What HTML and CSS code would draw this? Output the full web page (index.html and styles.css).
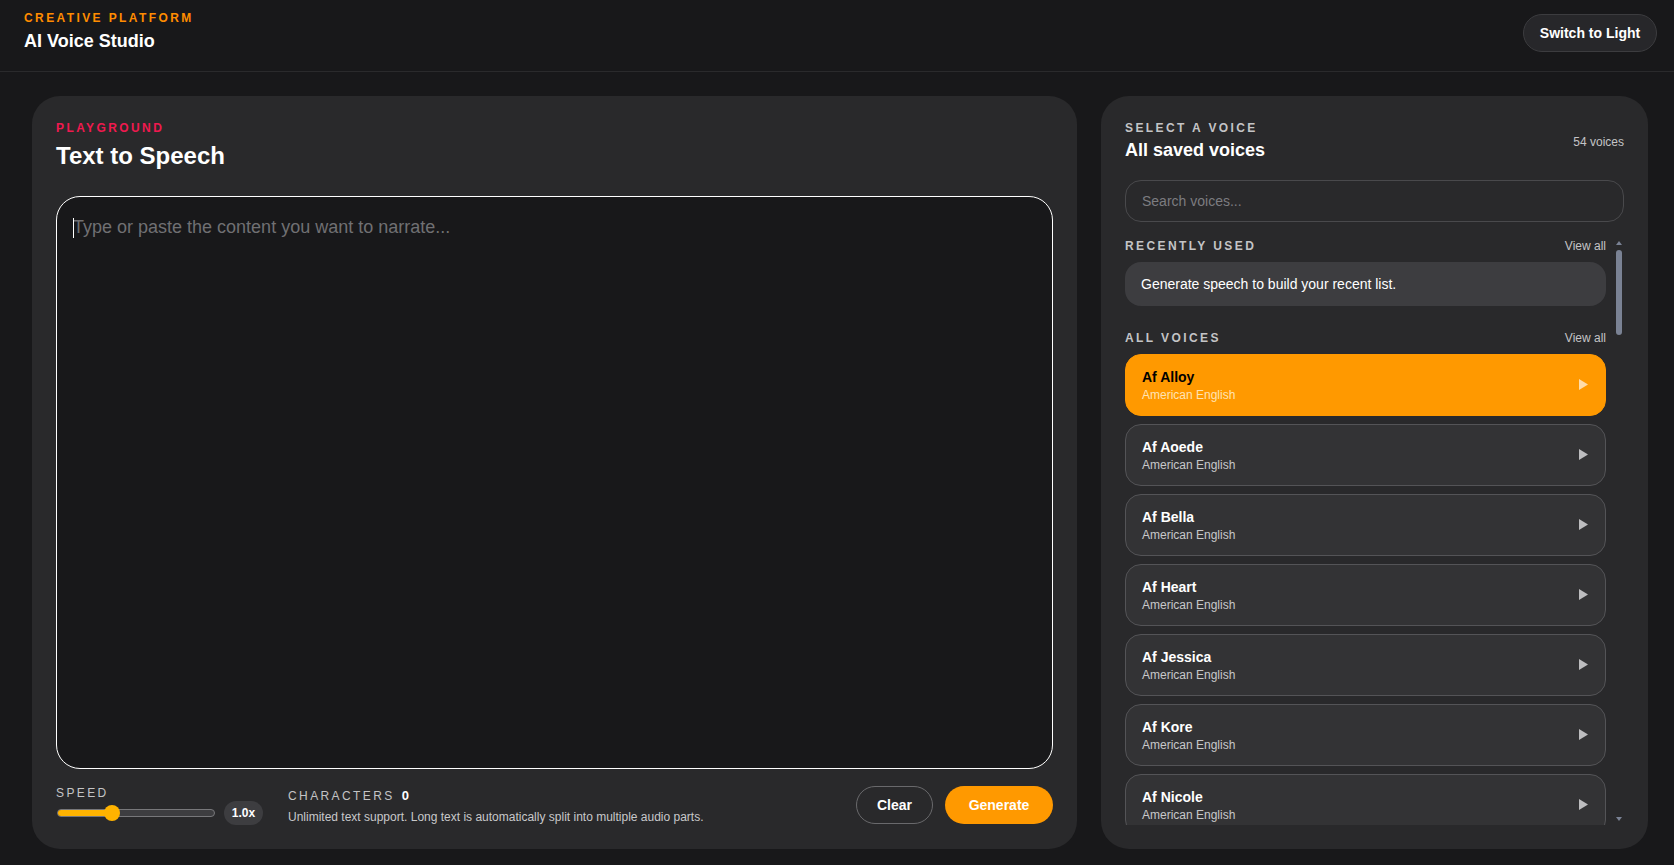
FILE: index.html
```html
<!DOCTYPE html>
<html lang="en">
<head>
    <meta charset="UTF-8">
    <meta name="viewport" content="width=device-width, initial-scale=1.0">
    <title>AI Voice Studio</title>
    <link rel="stylesheet" href="styles.css">
</head>
<body>

    <header class="topbar">
        <div>
            <p class="brand-eyebrow">Creative Platform</p>
            <h1 class="brand-title">AI Voice Studio</h1>
        </div>
        <button class="theme-btn" id="themeToggle">Switch to Light</button>
    </header>

    <main class="layout">
        <section class="panel editor">
            <p class="editor-eyebrow">Playground</p>
            <h2 class="editor-title">Text to Speech</h2>

            <div class="editor-field">
                <textarea class="editor-input" id="textInput" placeholder="Type or paste the content you want to narrate..."></textarea>
                <span class="editor-caret"></span>
            </div>

            <div class="controls">
                <div class="speed">
                    <span class="speed-label">Speed</span>
                    <div class="speed-row">
                        <div class="slider"><div class="slider-fill"><span class="slider-thumb"></span></div></div>
                        <span class="speed-value">1.0x</span>
                    </div>
                </div>
                <div class="chars">
                    <p class="chars-line"><span class="chars-label">Characters</span><span class="chars-count">0</span></p>
                    <p class="chars-note">Unlimited text support. Long text is automatically split into multiple audio parts.</p>
                </div>
                <div class="actions">
                    <button class="btn btn-ghost">Clear</button>
                    <button class="btn btn-primary">Generate</button>
                </div>
            </div>
        </section>

        <aside class="panel voices">
            <div class="voices-head">
                <div>
                    <p class="voices-eyebrow">Select a voice</p>
                    <h2 class="voices-title">All saved voices</h2>
                </div>
                <span class="voices-count">54 voices</span>
            </div>

            <input class="search" type="text" placeholder="Search voices...">

            <div class="voices-body">
                <div class="voices-scroll">
                    <div class="group-head">
                        <span class="group-name">Recently used</span>
                        <span class="view-all">View all</span>
                    </div>
                    <p class="recent-empty">Generate speech to build your recent list.</p>

                    <div class="group-head">
                        <span class="group-name">All voices</span>
                        <span class="view-all">View all</span>
                    </div>
                    <div class="voice-list">
                        <div class="voice-card active">
                            <div>
                                <div class="voice-name">Af Alloy</div>
                                <div class="voice-lang">American English</div>
                            </div>
                            <svg class="voice-play" viewBox="0 0 9 11"><path d="M0 0L9 5.5L0 11Z"/></svg>
                        </div>
                        <div class="voice-card">
                            <div>
                                <div class="voice-name">Af Aoede</div>
                                <div class="voice-lang">American English</div>
                            </div>
                            <svg class="voice-play" viewBox="0 0 9 11"><path d="M0 0L9 5.5L0 11Z"/></svg>
                        </div>
                        <div class="voice-card">
                            <div>
                                <div class="voice-name">Af Bella</div>
                                <div class="voice-lang">American English</div>
                            </div>
                            <svg class="voice-play" viewBox="0 0 9 11"><path d="M0 0L9 5.5L0 11Z"/></svg>
                        </div>
                        <div class="voice-card">
                            <div>
                                <div class="voice-name">Af Heart</div>
                                <div class="voice-lang">American English</div>
                            </div>
                            <svg class="voice-play" viewBox="0 0 9 11"><path d="M0 0L9 5.5L0 11Z"/></svg>
                        </div>
                        <div class="voice-card">
                            <div>
                                <div class="voice-name">Af Jessica</div>
                                <div class="voice-lang">American English</div>
                            </div>
                            <svg class="voice-play" viewBox="0 0 9 11"><path d="M0 0L9 5.5L0 11Z"/></svg>
                        </div>
                        <div class="voice-card">
                            <div>
                                <div class="voice-name">Af Kore</div>
                                <div class="voice-lang">American English</div>
                            </div>
                            <svg class="voice-play" viewBox="0 0 9 11"><path d="M0 0L9 5.5L0 11Z"/></svg>
                        </div>
                        <div class="voice-card">
                            <div>
                                <div class="voice-name">Af Nicole</div>
                                <div class="voice-lang">American English</div>
                            </div>
                            <svg class="voice-play" viewBox="0 0 9 11"><path d="M0 0L9 5.5L0 11Z"/></svg>
                        </div>
                    </div>
                </div>

                <div class="scrollbar">
                    <span class="scroll-arrow up"></span>
                    <span class="scroll-thumb"></span>
                    <span class="scroll-arrow down"></span>
                </div>
            </div>
        </aside>
    </main>

</body>
</html>
```

FILE: styles.css
```css
* { margin: 0; padding: 0; box-sizing: border-box; }
html, body { height: 100%; }
body { background-color: #18181a; color: #fff; font-family: 'Liberation Sans', Arial, sans-serif; overflow: hidden; }
button { font-family: inherit; cursor: pointer; }

.topbar { height: 72px; display: flex; justify-content: space-between; align-items: flex-start; padding: 12px 17px 0 24px; border-bottom: 1px solid #2a2a2c; }
.brand-eyebrow { color: #ff8c00; font-size: 12px; font-weight: 700; letter-spacing: 0.2em; text-transform: uppercase; margin-bottom: 5px; line-height: 13px; }
.brand-title { font-size: 18px; font-weight: 700; line-height: 22px; }
.theme-btn { width: 134px; height: 38px; margin-top: 2px; background: #27272a; border: 1px solid #3c3c3f; border-radius: 19px; color: #fff; font-size: 14px; font-weight: 700; }

.layout { display: grid; grid-template-columns: 1045px 547px; gap: 24px; padding: 24px 0 16px 32px; height: 793px; }
.panel { background: #29292b; border-radius: 28px; padding: 26px 24px 25px 24px; min-height: 0; }

.editor { display: flex; flex-direction: column; }
.editor-eyebrow { color: #f0194f; font-size: 12px; font-weight: 700; letter-spacing: 0.2em; text-transform: uppercase; line-height: 13px; margin-bottom: 6px; }
.editor-title { font-size: 24px; font-weight: 700; line-height: 29px; margin-bottom: 26px; }
.editor-field { flex: 1; position: relative; min-height: 0; }
.editor-input { display: block; width: 100%; height: 100%; background: #18181a; border: 1px solid #fff; border-radius: 24px; padding: 17px 16px 16px; color: #fff; font-family: inherit; font-size: 18px; line-height: 27px; resize: none; outline: none; }
.editor-input::placeholder { color: #707073; opacity: 1; }
.editor-caret { position: absolute; left: 17px; top: 22px; width: 1px; height: 20px; background: #fff; }

.controls { display: flex; align-items: flex-start; margin-top: 17px; height: 38px; }
.speed { width: 232px; flex: none; }
.speed-label, .chars-label { display: inline-block; color: #c4c4c6; font-size: 12px; letter-spacing: 0.2em; text-transform: uppercase; line-height: 14px; }
.speed-label { display: block; }
.speed-row { display: flex; align-items: center; gap: 9px; margin: 1px 0 0 1px; }
.slider { width: 158px; height: 8px; background: #3d3d40; border: 1px solid #77777a; border-radius: 4px; }
.slider-fill { position: relative; width: 54px; height: 6px; background: #ffb300; border-radius: 3px; }
.slider-thumb { position: absolute; right: -8px; top: -5px; width: 16px; height: 16px; background: #ffb300; border-radius: 50%; }
.speed-value { width: 39px; height: 24px; line-height: 24px; text-align: center; background: #3d3d40; border-radius: 12px; font-size: 12px; font-weight: 700; }

.chars { flex: 1; padding-top: 1px; }
.chars-line { line-height: 15px; }
.chars-count { margin-left: 7px; font-size: 13px; font-weight: 700; }
.chars-note { color: #c8c8ca; font-size: 12px; line-height: 14px; margin-top: 7px; }

.actions { display: flex; gap: 12px; }
.btn { height: 38px; border-radius: 19px; color: #fff; font-size: 14px; font-weight: 700; }
.btn-ghost { width: 77px; background: transparent; border: 1px solid #69696c; }
.btn-primary { width: 108px; background: #ff9900; border: none; }

.voices { display: flex; flex-direction: column; padding-bottom: 24px; }
.voices-head { display: flex; justify-content: space-between; align-items: center; }
.voices-eyebrow { color: #c4c4c6; font-size: 12px; font-weight: 700; letter-spacing: 0.2em; text-transform: uppercase; line-height: 13px; margin-bottom: 4px; }
.voices-title { font-size: 18px; font-weight: 700; line-height: 22px; }
.voices-count { color: #c4c4c6; font-size: 12px; }

.search { width: 100%; height: 42px; flex: none; margin-top: 19px; padding: 0 16px; background: transparent; border: 1px solid #49494c; border-radius: 16px; color: #fff; font-family: inherit; font-size: 14px; outline: none; }
.search::placeholder { color: #7c7c80; opacity: 1; }

.voices-body { flex: 1; min-height: 0; display: flex; gap: 10px; margin-top: 17px; padding-right: 2px; }
.voices-scroll { flex: 1; min-width: 0; overflow: hidden; }

.scrollbar { flex: none; width: 6px; display: flex; flex-direction: column; padding: 2px 0 4px; }
.scroll-arrow { flex: none; width: 0; height: 0; border-left: 3px solid transparent; border-right: 3px solid transparent; }
.scroll-arrow.up { border-bottom: 4px solid #7a8294; }
.scroll-arrow.down { border-top: 4px solid #7a8294; margin-top: auto; }
.scroll-thumb { flex: none; height: 85px; margin-top: 5px; background: #7a8294; border-radius: 3px; }

.group-head { display: flex; justify-content: space-between; align-items: center; height: 14px; margin-bottom: 9px; }
.group-name { color: #c4c4c6; font-size: 12px; font-weight: 700; letter-spacing: 0.2em; text-transform: uppercase; }
.view-all { color: #c4c4c6; font-size: 12px; }

.recent-empty { height: 44px; line-height: 44px; padding-left: 16px; margin-bottom: 25px; background: #3d3d40; border-radius: 16px; font-size: 14px; }

.voice-list { display: flex; flex-direction: column; gap: 8px; }
.voice-card { flex: none; height: 62px; display: flex; align-items: center; justify-content: space-between; padding: 0 17px 0 16px; background: #333335; border: 1px solid #545457; border-radius: 16px; }
.voice-name { font-size: 14px; font-weight: 700; line-height: 17px; }
.voice-lang { color: #c8c8ca; font-size: 12px; line-height: 14px; margin-top: 2px; }
.voice-play { width: 9px; height: 11px; margin-bottom: 1px; fill: #bdbdbf; }
.voice-card.active { background: #ff9900; border-color: #ff9900; }
.voice-card.active .voice-name { color: #000; }
.voice-card.active .voice-lang { color: #ffe3b3; }
.voice-card.active .voice-play { fill: #ffdcaa; }
```
